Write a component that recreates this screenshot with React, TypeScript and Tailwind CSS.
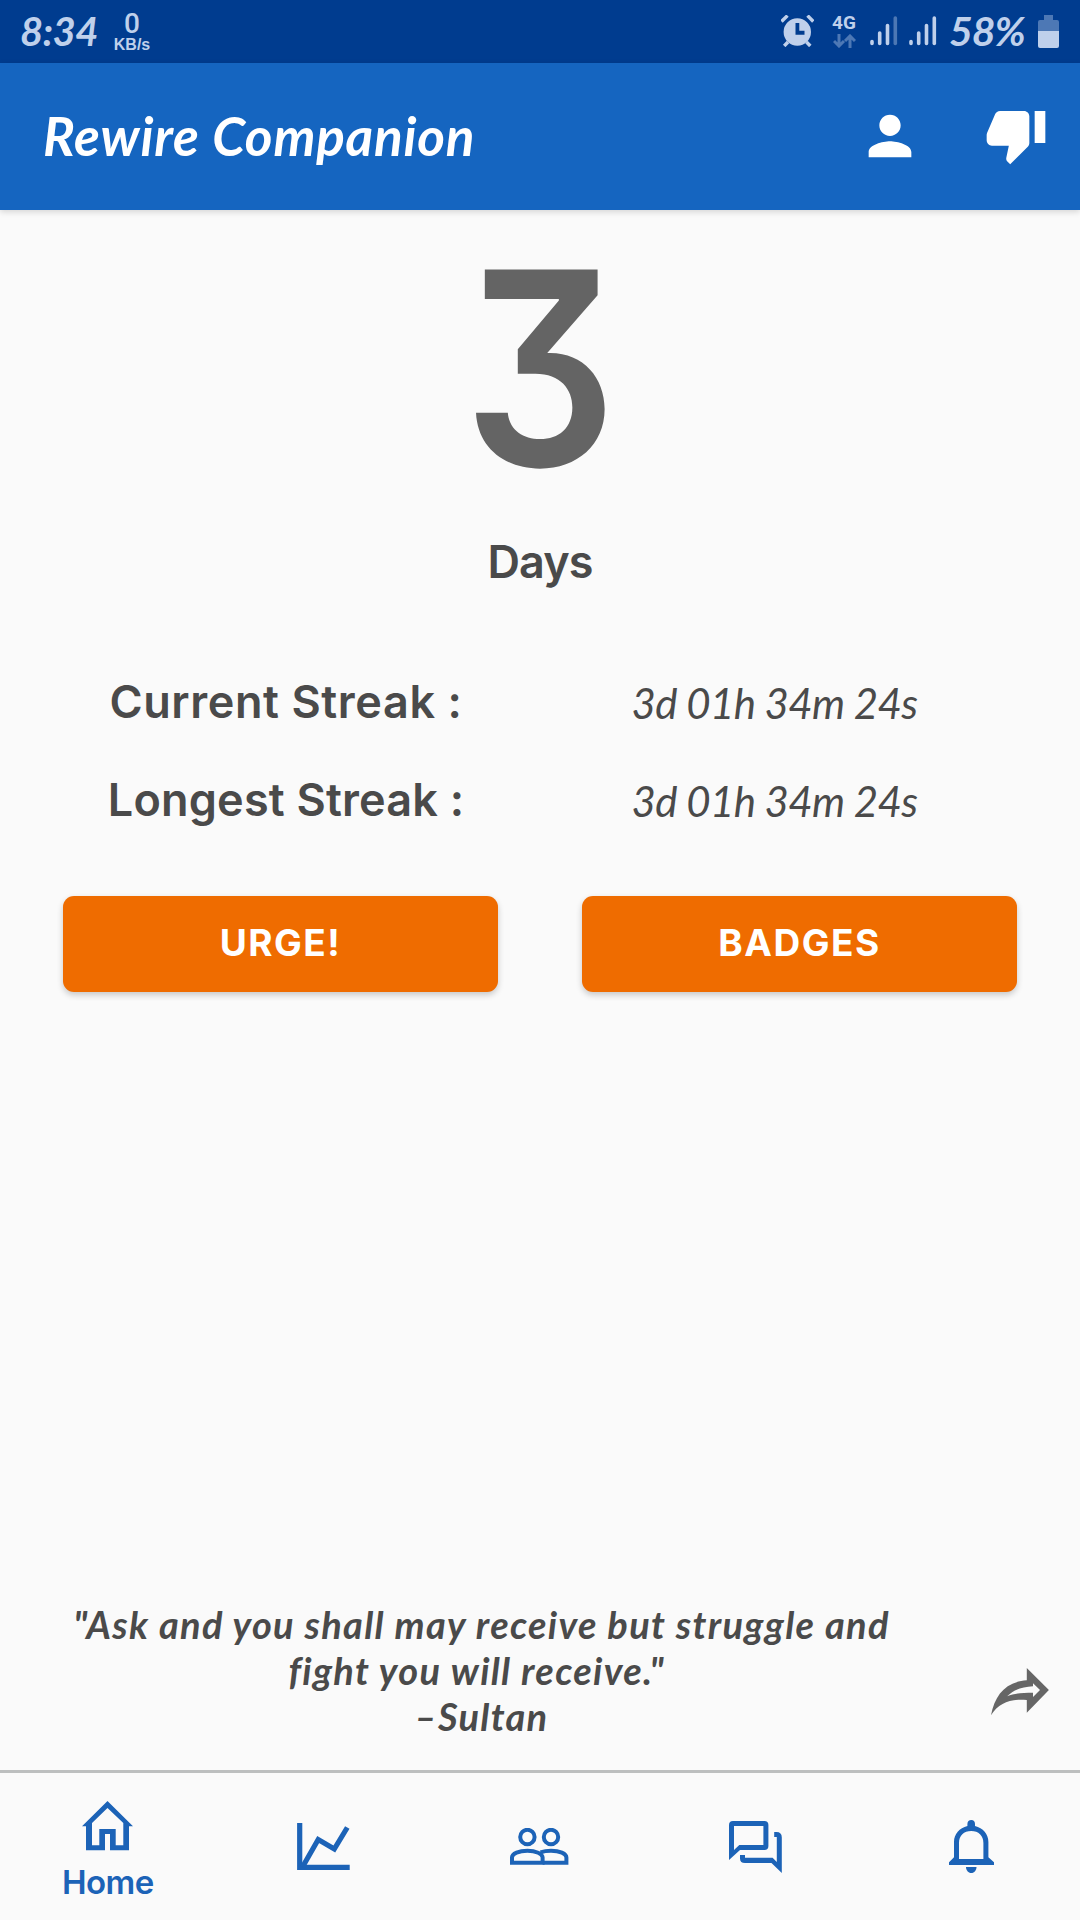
import { MdPerson, MdThumbDown } from "react-icons/md"

const SCRIPT = "font-['Lato','Noto_Sans',sans-serif] italic"

const streaks = [
  { label: 'Current Streak :', value: '3d 01h 34m 24s', tracking: 'tracking-[0.6px]' },
  { label: 'Longest Streak :', value: '3d 01h 34m 24s', tracking: 'tracking-[0.2px]' },
]

const tabs = [
  { id: 'home', label: 'Home', icon: HomeIcon },
  { id: 'stats', label: '', icon: ChartIcon },
  { id: 'friends', label: '', icon: PeopleIcon },
  { id: 'chat', label: '', icon: ChatIcon },
  { id: 'alerts', label: '', icon: BellIcon },
]

function HomeIcon() {
  return (
    <svg width="51" height="50" viewBox="0 0 51 50" fill="currentColor">
      <path fillRule="evenodd" d="M25.5 0L51 25.3H47V49.3H28V33H23V49.3H4V25.3H0ZM25.5 7L10 22V44.3H17.3V28H33.7V44.3H41.3V22Z" />
    </svg>
  )
}

function ChartIcon() {
  return (
    <svg width="53" height="47" viewBox="0 0 53 47" fill="none" stroke="currentColor" strokeWidth="5.2">
      <path d="M2.7 0V44.4H52.7" />
      <path d="M5.5 44L21.2 16.5L37.3 26L50.3 4.5" />
    </svg>
  )
}

function PeopleIcon() {
  return (
    <svg width="59" height="37" viewBox="0 0 59 37" fill="none" stroke="currentColor" strokeWidth="4">
      <circle cx="17.4" cy="9" r="7.2" />
      <circle cx="41" cy="9" r="7.2" />
      <path d="M2 34.8V29.5C2 25.5 9 22.8 17.4 22.8S32.6 25.8 32.6 29.5V34.8Z" />
      <path d="M30.5 24.3C33.5 23.3 37 22.8 41 22.8C49.5 22.8 56.4 25.5 56.4 29.5V34.8H32.6" />
    </svg>
  )
}

function ChatIcon() {
  return (
    <svg width="53" height="52" viewBox="0 0 53 52" fill="currentColor">
      <path fillRule="evenodd" d="M4 0H35.4a4 4 0 0 1 4 4V25a4 4 0 0 1-4 4H11L0 39V4a4 4 0 0 1 4-4ZM5 5V29L10.3 24H34.4V5Z" />
      <path d="M45.2 11H47.5Q52.8 11 52.8 16.5V52L42.5 42H16Q11 42 11 37.5V34H16V36.7H43.6L47.8 41V16H45.2Z" />
    </svg>
  )
}

function BellIcon() {
  return (
    <svg width="45" height="53" viewBox="0 0 45 53" fill="currentColor">
      <path fillRule="evenodd" d="M0 45V42.3L5 37.3V22C5 14 10.5 8 18.4 6V4C18.4 1.5 20 0 22.3 0S26 1.5 26 4V6C34 8 39.4 14 39.4 22V37.3L45 42.3V45ZM10 39H34.4V23C34.4 15.5 29.5 11 22.2 11S10 15.5 10 23Z" />
      <path d="M17 47H27.5C27.5 50.3 25.3 53 22.3 53S17 50.3 17 47Z" />
    </svg>
  )
}

function ShareIcon() {
  return (
    <svg width="58" height="48" viewBox="0 0 58 48" fill="#666666">
      <path fillRule="evenodd" d="M35.8 0L57.9 22L35.8 44.7V32C20 30.5 8 34.5 0 47.3C4 27 14.5 13.8 35.8 12.3ZM42 15.3V18.3C31 18.8 22 22 16.2 28.3C24 25.2 32 24.8 42 24.7V29L49 22Z" />
    </svg>
  )
}

function AlarmIcon() {
  return (
    <svg width="33" height="32" viewBox="0 0 33 32" fill="#bfd0eb">
      <path fillRule="evenodd" d="M16.3 3.3a13.7 13.7 0 1 1 0 27.4a13.7 13.7 0 1 1 0-27.4ZM14.5 8V19.7H23.5V15.8H18.3V8Z" />
      <path d="M0.5 6.5L6.5 0.6M26.5 0.6L32.3 6.5M7 27L3.2 31M25.5 27L29.3 31" stroke="#bfd0eb" strokeWidth="3.4" />
    </svg>
  )
}

function Signal({ full }: { full?: boolean }) {
  return (
    <svg width="28" height="30" viewBox="0 0 28 30" stroke="#bfd0eb" strokeWidth="3.6" strokeLinecap="round">
      <path d="M2 25.5V27.5M9.7 17V27.5M17.5 9.5V27.5" />
      <path d="M25.3 2V27.5" opacity={full ? 1 : 0.4} />
    </svg>
  )
}

function StatusBar() {
  return (
    <div className="flex h-[63px] items-start bg-[#003c8f] text-[#bfd0eb]">
      <span className={`${SCRIPT} ml-[20px] mt-[7px] w-[80px] whitespace-nowrap text-[40px] font-bold leading-[48px] tracking-[-0.5px]`}>8:34</span>
      <div className="ml-[13px] mt-[10px] flex w-[38px] flex-col items-center">
        <span className="font-['Roboto',sans-serif] text-[28px] font-medium leading-[28px]">0</span>
        <span className="font-['Liberation_Sans',sans-serif] text-[16px] font-bold leading-[14px]">KB/s</span>
      </div>
      <div className="ml-auto mr-[21px] flex items-start">
        <div className="mt-[15px]"><AlarmIcon /></div>
        <div className="ml-[17px] mt-[13px] flex w-[26px] flex-col items-center">
          <span className="font-['Roboto',sans-serif] text-[19px] font-bold leading-[19px]">4G</span>
          <svg width="23" height="14" viewBox="0 0 23 14" className="mt-[2px]" fill="none" stroke="#4d78b5" strokeWidth="3">
            <path d="M6 0V12M1 7L6 12L11 7M17 14V2M12 7L17 2L22 7" />
          </svg>
        </div>
        <div className="ml-[13px] mt-[16px]"><Signal /></div>
        <div className="ml-[11px] mt-[16px]"><Signal full /></div>
        <span className={`${SCRIPT} ml-[12px] mt-[7px] w-[84px] whitespace-nowrap text-[41px] font-bold leading-[48px] tracking-[-1px]`}>58%</span>
        <svg width="21" height="33" viewBox="0 0 21 33" className="ml-[5px] mt-[15px]">
          <path d="M6 0H15V5H19a2 2 0 0 1 2 2V16H0V7a2 2 0 0 1 2-2H6Z" fill="#4d78b5" />
          <path d="M0 16H21V31a2 2 0 0 1-2 2H2a2 2 0 0 1-2-2Z" fill="#bfd0eb" />
        </svg>
      </div>
    </div>
  )
}

export default function App() {
  return (
    <div className="flex h-[1920px] w-[1080px] flex-col overflow-hidden bg-[#fafafa] font-['Inter',sans-serif] text-[#4a4a4a]">
      <StatusBar />

      {/* App bar */}
      <header className="z-10 flex h-[147px] items-center bg-[#1565c0] pl-[43px] pr-[32px] text-white shadow-[0_2px_6px_rgba(0,0,0,0.15)]">
        <h1 className={`${SCRIPT} mb-[2px] whitespace-nowrap text-[53px] font-bold leading-[64px] tracking-[0.8px]`}>Rewire Companion</h1>
        <div className="mb-[4px] ml-auto flex items-center gap-[62px]">
          <MdPerson size={64} className="mt-[2px]" />
          <MdThumbDown size={64} />
        </div>
      </header>

      <main className="flex flex-1 flex-col">
        <div className="mt-[20px] flex h-[276px] items-center justify-center text-[270px] font-semibold leading-[276px] text-[#646464] [font-feature-settings:'cv09']">
          <span className="inline-block scale-x-[0.89]">3</span>
        </div>
        <div className="mt-[26px] text-center text-[45px] font-semibold leading-[60px] tracking-[-1px]">Days</div>

        <div className="mt-[61px] flex flex-col">
          {streaks.map((streak) => (
            <div key={streak.label} className="grid h-[98px] grid-cols-[572px_405px] items-center text-center">
              <span className={`text-[45px] font-semibold whitespace-nowrap ${streak.tracking}`}>{streak.label}</span>
              <span className={`${SCRIPT} mt-[3px] whitespace-nowrap text-[42px] tracking-[-0.6px]`}>{streak.value}</span>
            </div>
          ))}
        </div>

        <div className="mt-[47px] flex gap-[84px] px-[63px]">
          {['URGE!', 'BADGES'].map((name) => (
            <button
              key={name}
              className="h-[96px] flex-1 rounded-[11px] bg-[#ef6c00] pb-[2px] text-[37px] font-bold tracking-[1.5px] text-white shadow-[0_3px_6px_rgba(0,0,0,0.2)]"
            >
              {name}
            </button>
          ))}
        </div>

        {/* Quote of the day */}
        <div className="mb-[31px] mt-auto flex items-center">
          <p className={`${SCRIPT} ml-[43px] w-[877px] text-center text-[38px] font-bold leading-[46px] tracking-[1.3px]`}>
            "Ask and you shall may receive but struggle and
            <br />
            fight you will receive."&nbsp;
            <br />
            –Sultan
          </p>
          <button className="ml-[71px] mt-[44px]"><ShareIcon /></button>
        </div>
      </main>

      <nav className="grid h-[150px] grid-cols-5 border-t-[3px] border-[#bdbfbf] pr-[1px] text-[#1c63b7]">
        {tabs.map((tab) => (
          <button key={tab.id} className="flex flex-col items-center justify-center">
            <tab.icon />
            {tab.label && <span className="mb-[-10px] mt-[11px] text-[33px] font-semibold leading-[40px] tracking-[-0.5px]">{tab.label}</span>}
          </button>
        ))}
      </nav>
    </div>
  )
}
